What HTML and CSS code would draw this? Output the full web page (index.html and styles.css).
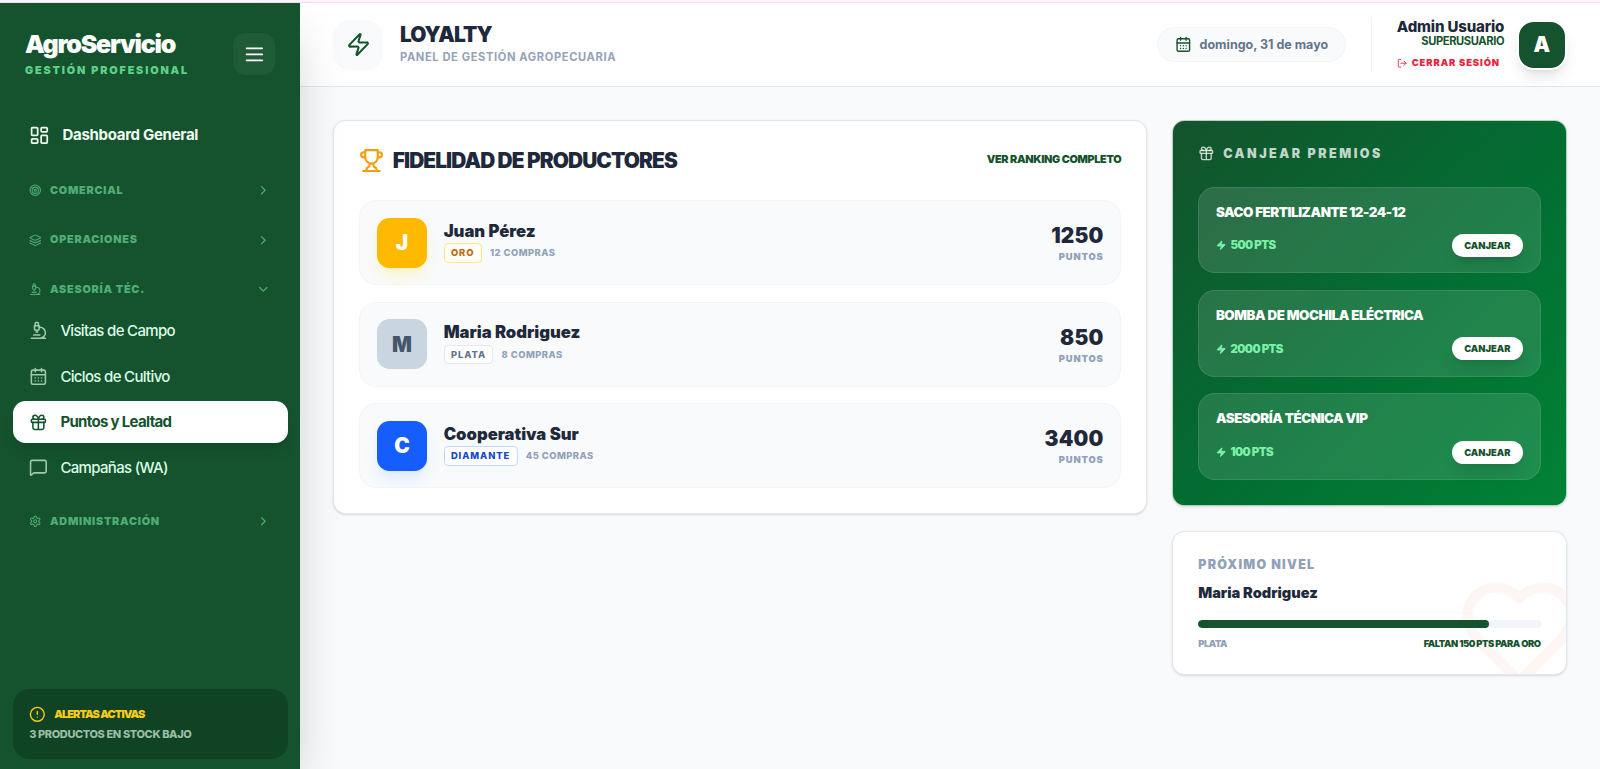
FILE: index.html
```html
<!DOCTYPE html>
<html lang="es">
<head>
    <meta charset="UTF-8">
    <meta name="viewport" content="width=device-width, initial-scale=1.0">
    <title>AgroServicio - Loyalty</title>
    <link rel="stylesheet" href="styles.css">
</head>
<body>
    <svg class="sprite" width="0" height="0">
        <symbol id="i-gift" viewBox="0 0 24 24">
            <rect x="3" y="8" width="18" height="4" rx="1"/>
            <path d="M12 8v13M19 12v7a2 2 0 0 1-2 2H7a2 2 0 0 1-2-2v-7"/>
            <path d="M7.5 8a2.5 2.5 0 0 1 0-5A4.8 8 0 0 1 12 8a4.8 8 0 0 1 4.5-5 2.5 2.5 0 0 1 0 5"/>
        </symbol>
        <symbol id="i-calendar" viewBox="0 0 24 24">
            <path d="M8 2v4M16 2v4M3 10h18"/>
            <rect x="3" y="4" width="18" height="18" rx="2"/>
            <path d="M8 14h.01M12 14h.01M16 14h.01M8 18h.01M12 18h.01M16 18h.01"/>
        </symbol>
        <symbol id="i-microscope" viewBox="0 0 24 24">
            <path d="M6 18h8M3 22h18M14 22a7 7 0 1 0 0-14h-1M9 14h2"/>
            <path d="M9 12a2 2 0 0 1-2-2V6h6v4a2 2 0 0 1-2 2Z"/>
            <path d="M12 6V3a1 1 0 0 0-1-1H9a1 1 0 0 0-1 1v3"/>
        </symbol>
        <symbol id="i-zap" viewBox="0 0 24 24">
            <path d="M4 14a1 1 0 0 1-.78-1.63l9.9-10.2a.5.5 0 0 1 .86.46l-1.92 6.02A1 1 0 0 0 13 10h7a1 1 0 0 1 .78 1.63l-9.9 10.2a.5.5 0 0 1-.86-.46l1.92-6.02A1 1 0 0 0 11 14z"/>
        </symbol>
        <symbol id="i-right" viewBox="0 0 24 24"><path d="m9 18 6-6-6-6"/></symbol>
        <symbol id="i-down" viewBox="0 0 24 24"><path d="m6 9 6 6 6-6"/></symbol>
    </svg>

    <div class="app">
        <aside class="sidebar">
            <div class="brand">
                <div>
                    <h1>AgroServicio</h1>
                    <p>Gestión Profesional</p>
                </div>
                <button class="menu-btn">
                    <svg class="icon s20" viewBox="0 0 24 24"><path d="M3 5h18M3 12h18M3 19h18"/></svg>
                </button>
            </div>

            <nav class="nav">
                <a class="nav-main">
                    <svg class="icon s20" viewBox="0 0 24 24"><rect x="3" y="3" width="7" height="9" rx="1"/><rect x="14" y="3" width="7" height="5" rx="1"/><rect x="14" y="12" width="7" height="9" rx="1"/><rect x="3" y="16" width="7" height="5" rx="1"/></svg>
                    Dashboard General
                </a>
                <div class="nav-group">
                    <svg class="icon s12" viewBox="0 0 24 24"><circle cx="12" cy="12" r="10"/><circle cx="12" cy="12" r="6"/><circle cx="12" cy="12" r="2"/></svg>
                    <span>Comercial</span>
                    <svg class="icon s14"><use href="#i-right"/></svg>
                </div>
                <div class="nav-group">
                    <svg class="icon s12" viewBox="0 0 24 24"><path d="M12.83 2.18a2 2 0 0 0-1.66 0L2.6 6.08a1 1 0 0 0 0 1.83l8.58 3.91a2 2 0 0 0 1.66 0l8.58-3.9a1 1 0 0 0 0-1.83z"/><path d="M2 12a1 1 0 0 0 .58.91l8.6 3.91a2 2 0 0 0 1.65 0l8.58-3.9A1 1 0 0 0 22 12"/><path d="M2 17a1 1 0 0 0 .58.91l8.6 3.91a2 2 0 0 0 1.65 0l8.58-3.9A1 1 0 0 0 22 17"/></svg>
                    <span>Operaciones</span>
                    <svg class="icon s14"><use href="#i-right"/></svg>
                </div>
                <div class="nav-group">
                    <svg class="icon s12"><use href="#i-microscope"/></svg>
                    <span>Asesoría Téc.</span>
                    <svg class="icon s14"><use href="#i-down"/></svg>
                </div>
                <div class="nav-items">
                    <a class="nav-item"><svg class="icon s18"><use href="#i-microscope"/></svg>Visitas de Campo</a>
                    <a class="nav-item"><svg class="icon s18"><use href="#i-calendar"/></svg>Ciclos de Cultivo</a>
                    <a class="nav-item active"><svg class="icon s18"><use href="#i-gift"/></svg>Puntos y Lealtad</a>
                    <a class="nav-item"><svg class="icon s18" viewBox="0 0 24 24"><path d="M22 17a2 2 0 0 1-2 2H6.8a2 2 0 0 0-1.4.6l-2.2 2.2A.7.7 0 0 1 2 21.3V5a2 2 0 0 1 2-2h16a2 2 0 0 1 2 2z"/></svg>Campañas (WA)</a>
                </div>
                <div class="nav-group">
                    <svg class="icon s12" viewBox="0 0 24 24"><path d="M12.22 2h-.44a2 2 0 0 0-2 2v.18a2 2 0 0 1-1 1.73l-.43.25a2 2 0 0 1-2 0l-.15-.08a2 2 0 0 0-2.73.73l-.22.38a2 2 0 0 0 .73 2.73l.15.1a2 2 0 0 1 1 1.72v.51a2 2 0 0 1-1 1.74l-.15.09a2 2 0 0 0-.73 2.73l.22.38a2 2 0 0 0 2.73.73l.15-.08a2 2 0 0 1 2 0l.43.25a2 2 0 0 1 1 1.73V20a2 2 0 0 0 2 2h.44a2 2 0 0 0 2-2v-.18a2 2 0 0 1 1-1.73l.43-.25a2 2 0 0 1 2 0l.15.08a2 2 0 0 0 2.73-.73l.22-.39a2 2 0 0 0-.73-2.73l-.15-.08a2 2 0 0 1-1-1.74v-.5a2 2 0 0 1 1-1.74l.15-.09a2 2 0 0 0 .73-2.73l-.22-.38a2 2 0 0 0-2.73-.73l-.15.08a2 2 0 0 1-2 0l-.43-.25a2 2 0 0 1-1-1.73V4a2 2 0 0 0-2-2z"/><circle cx="12" cy="12" r="3"/></svg>
                    <span>Administración</span>
                    <svg class="icon s14"><use href="#i-right"/></svg>
                </div>
            </nav>

            <div class="alerts">
                <div class="alerts-title">
                    <svg class="icon s16" viewBox="0 0 24 24"><circle cx="12" cy="12" r="10"/><path d="M12 8v4M12 16h.01"/></svg>
                    Alertas activas
                </div>
                <p>3 productos en stock bajo</p>
            </div>
        </aside>

        <div class="content">
            <header class="topbar">
                <div class="topbar-icon"><svg class="icon s24"><use href="#i-zap"/></svg></div>
                <div class="topbar-title">
                    <h2>Loyalty</h2>
                    <p>Panel de gestión agropecuaria</p>
                </div>
                <div class="date"><svg class="icon s16"><use href="#i-calendar"/></svg>domingo, 31 de mayo</div>
                <div class="user">
                    <div class="user-info">
                        <strong>Admin Usuario</strong>
                        <span class="role">Superusuario</span>
                        <a class="logout">
                            <svg class="icon s10" viewBox="0 0 24 24"><path d="M9 21H5a2 2 0 0 1-2-2V5a2 2 0 0 1 2-2h4M16 17l5-5-5-5M21 12H9"/></svg>
                            Cerrar sesión
                        </a>
                    </div>
                    <div class="user-avatar">A</div>
                </div>
            </header>

            <main class="main">
                <section class="card ranking">
                    <div class="ranking-head">
                        <svg class="icon s24" viewBox="0 0 24 24"><path d="M6 9H4.5a2.5 2.5 0 0 1 0-5H6M18 9h1.5a2.5 2.5 0 0 0 0-5H18M4 22h16"/><path d="M10 14.66V17c0 .55-.47.98-.97 1.21C7.85 18.75 7 20.24 7 22M14 14.66V17c0 .55.47.98.97 1.21C16.15 18.75 17 20.24 17 22M18 2H6v7a6 6 0 0 0 12 0V2Z"/></svg>
                        <h3>Fidelidad de Productores</h3>
                        <a>Ver ranking completo</a>
                    </div>
                    <div class="producers">
                        <div class="producer">
                            <div class="avatar gold">J</div>
                            <div class="producer-info">
                                <h4>Juan Pérez</h4>
                                <p><span class="badge gold">Oro</span>12 compras</p>
                            </div>
                            <div class="points"><strong>1250</strong><span>Puntos</span></div>
                        </div>
                        <div class="producer">
                            <div class="avatar silver">M</div>
                            <div class="producer-info">
                                <h4>Maria Rodriguez</h4>
                                <p><span class="badge silver">Plata</span>8 compras</p>
                            </div>
                            <div class="points"><strong>850</strong><span>Puntos</span></div>
                        </div>
                        <div class="producer">
                            <div class="avatar diamond">C</div>
                            <div class="producer-info">
                                <h4>Cooperativa Sur</h4>
                                <p><span class="badge diamond">Diamante</span>45 compras</p>
                            </div>
                            <div class="points"><strong>3400</strong><span>Puntos</span></div>
                        </div>
                    </div>
                </section>

                <div class="side">
                    <section class="card rewards">
                        <h3><svg class="icon s16"><use href="#i-gift"/></svg>Canjear premios</h3>
                        <div class="reward">
                            <h4>Saco Fertilizante 12-24-12</h4>
                            <div class="reward-row">
                                <span><svg class="icon s10 filled"><use href="#i-zap"/></svg>500 pts</span>
                                <button>Canjear</button>
                            </div>
                        </div>
                        <div class="reward">
                            <h4>Bomba de Mochila Eléctrica</h4>
                            <div class="reward-row">
                                <span><svg class="icon s10 filled"><use href="#i-zap"/></svg>2000 pts</span>
                                <button>Canjear</button>
                            </div>
                        </div>
                        <div class="reward">
                            <h4>Asesoría Técnica VIP</h4>
                            <div class="reward-row">
                                <span><svg class="icon s10 filled"><use href="#i-zap"/></svg>100 pts</span>
                                <button>Canjear</button>
                            </div>
                        </div>
                    </section>

                    <section class="card next-level">
                        <svg class="icon heart" viewBox="0 0 24 24"><path d="M19 14c1.49-1.46 3-3.21 3-5.5A5.5 5.5 0 0 0 16.5 3c-1.76 0-3 .5-4.5 2-1.5-1.5-2.74-2-4.5-2A5.5 5.5 0 0 0 2 8.5c0 2.3 1.5 4.05 3 5.5l7 7Z"/></svg>
                        <h3>Próximo nivel</h3>
                        <h4>Maria Rodriguez</h4>
                        <div class="progress"><div class="progress-fill" style="width: 85%"></div></div>
                        <div class="progress-labels"><span>Plata</span><span>Faltan 150 pts para Oro</span></div>
                    </section>
                </div>
            </main>
        </div>
    </div>
</body>
</html>
```

FILE: styles.css
```css
* {
    box-sizing: border-box;
    margin: 0;
    padding: 0;
}
html {
    font-size: 16.667px;
}
body {
    font-family: Inter, sans-serif;
    background: #f8fafc;
    color: #1e293b;
    height: 100vh;
    overflow: hidden;
    border-top: 2px solid #fcf3fd;
}
button {
    font-family: inherit;
    border: none;
    cursor: pointer;
}
.sprite {
    display: block;
}
.icon {
    flex-shrink: 0;
    fill: none;
    stroke: currentColor;
    stroke-width: 2;
    stroke-linecap: round;
    stroke-linejoin: round;
}
.s10 { width: 0.625rem; height: 0.625rem; }
.s12 { width: 0.75rem; height: 0.75rem; }
.s14 { width: 0.875rem; height: 0.875rem; }
.s16 { width: 1rem; height: 1rem; }
.s18 { width: 1.125rem; height: 1.125rem; }
.s20 { width: 1.25rem; height: 1.25rem; }
.s24 { width: 1.5rem; height: 1.5rem; }
.filled { fill: currentColor; }

.app {
    display: flex;
    height: 100%;
    border-top: 1px solid #efe2f0;
}

/* Sidebar */
.sidebar {
    width: 18rem;
    flex-shrink: 0;
    display: flex;
    flex-direction: column;
    background: #14532d;
    color: #fff;
    box-shadow: 0 25px 50px -12px rgba(0,0,0,0.25);
    z-index: 2;
    padding-bottom: 0.6rem;
}
.brand {
    display: flex;
    justify-content: space-between;
    align-items: center;
    padding: 1.65rem 1.5rem 0;
    height: 4.5rem;
}
.brand h1 {
    font-size: 1.5rem;
    line-height: 1.75rem;
    margin-top: 0.1rem;
    font-weight: 900;
    letter-spacing: -0.05em;
}
.brand p {
    font-size: 0.65rem;
    line-height: 1.1rem;
    margin-top: 0.15rem;
    font-weight: 900;
    letter-spacing: 0.17em;
    text-transform: uppercase;
    color: #5fcf8a;
}
.menu-btn {
    display: flex;
    align-items: center;
    justify-content: center;
    width: 2.5rem;
    height: 2.5rem;
    border-radius: 0.75rem;
    background: rgba(255,255,255,0.05);
    color: #fff;
}
.nav {
    flex: 1;
    padding: 2.04rem 0.75rem 0;
}
.nav-main {
    display: flex;
    align-items: center;
    gap: 0.75rem;
    height: 2.75rem;
    padding: 0 1rem;
    font-size: 0.9rem;
    font-weight: 700;
    letter-spacing: -0.02em;
    color: #f0fdf4;
}
.nav-group {
    display: flex;
    align-items: center;
    gap: 0.5rem;
    height: 1.95rem;
    margin-top: 1rem;
    padding: 0 1rem;
    font-size: 0.65rem;
    font-weight: 900;
    letter-spacing: 0.07em;
    text-transform: uppercase;
    color: #4fae74;
}
.nav-group span {
    flex: 1;
}
.nav-items {
    display: flex;
    flex-direction: column;
    gap: 0.25rem;
    padding-top: 0.25rem;
}
.nav-item {
    display: flex;
    align-items: center;
    gap: 0.75rem;
    height: 2.5rem;
    padding: 0 1rem;
    border-radius: 0.75rem;
    font-size: 0.9rem;
    font-weight: 500;
    letter-spacing: -0.045em;
    color: #dcfce7;
}
.nav-item .icon {
    opacity: 0.7;
}
.nav-item.active {
    background: #fff;
    color: #14532d;
    font-weight: 700;
    box-shadow: 0 10px 15px -3px rgba(0,0,0,0.1), 0 4px 6px -4px rgba(0,0,0,0.1);
}
.nav-item.active .icon {
    opacity: 1;
}
.alerts {
    margin: 0 0.75rem;
    height: 4.2rem;
    padding: 1rem;
    border-radius: 1rem;
    background: rgba(0,0,0,0.2);
    font-size: 0.66rem;
    font-weight: 800;
    text-transform: uppercase;
    letter-spacing: -0.035em;
}
.alerts-title {
    display: flex;
    align-items: center;
    gap: 0.5rem;
    height: 1rem;
    color: #facc15;
    font-weight: 900;
    letter-spacing: -0.085em;
}
.alerts p {
    margin-top: 0.28rem;
    line-height: 0.9rem;
    color: #9bbda8;
}

/* Header */
.content {
    flex: 1;
    min-width: 0;
}
.topbar {
    display: flex;
    align-items: center;
    height: 84px;
    padding: 0 2rem;
    background: #fff;
    border-bottom: 1px solid #e2e8f0;
}
.topbar-icon {
    display: flex;
    align-items: center;
    justify-content: center;
    width: 3rem;
    height: 3rem;
    margin-right: 1rem;
    border-radius: 1rem;
    background: #f8fafc;
    color: #14532d;
}
.topbar-title {
    flex: 1;
}
.topbar-title h2 {
    margin-top: 0.08rem;
    font-size: 1.25rem;
    line-height: 1.25rem;
    font-weight: 900;
    letter-spacing: -0.04em;
    text-transform: uppercase;
}
.topbar-title p {
    margin-top: 0.18rem;
    font-size: 0.67rem;
    line-height: 1rem;
    font-weight: 700;
    letter-spacing: 0.054em;
    text-transform: uppercase;
    color: #94a3b8;
}
.date {
    display: flex;
    align-items: center;
    gap: 0.5rem;
    height: 2.125rem;
    padding: 0 1rem;
    border: 1px solid #f1f5f9;
    border-radius: 2rem;
    background: #f8fafc;
    color: #64748b;
    font-size: 0.75rem;
    font-weight: 700;
}
.date .icon {
    color: #14532d;
}
.user {
    display: flex;
    align-items: center;
    gap: 0.75rem;
    height: 3.25rem;
    margin-left: 1.5rem;
    padding-left: 1.5rem;
    border-left: 1px solid #f1f5f9;
}
.user-info {
    display: flex;
    flex-direction: column;
    align-items: flex-end;
}
.user-info strong {
    font-size: 0.9rem;
    line-height: 1.03rem;
    font-weight: 800;
    letter-spacing: -0.01em;
}
.role {
    font-size: 0.67rem;
    line-height: 0.82rem;
    font-weight: 700;
    letter-spacing: -0.035em;
    text-transform: uppercase;
    color: #14532d;
}
.logout {
    display: flex;
    align-items: center;
    gap: 0.25rem;
    margin-top: 0.43rem;
    padding-right: 0.25rem;
    font-size: 0.5625rem;
    line-height: 0.875rem;
    font-weight: 900;
    letter-spacing: 0.1em;
    text-transform: uppercase;
    color: #e7243c;
}
.user-avatar {
    display: flex;
    align-items: center;
    justify-content: center;
    width: 3rem;
    height: 3rem;
    border: 2px solid #fff;
    border-radius: 1rem;
    background: #14532d;
    color: #fff;
    font-size: 1.25rem;
    font-weight: 900;
    box-shadow: 0 10px 15px -3px rgba(0,0,0,0.1), 0 4px 6px -4px rgba(0,0,0,0.1);
}

/* Main */
.main {
    display: grid;
    grid-template-columns: repeat(3, 1fr);
    gap: 1.5rem;
    align-items: start;
    padding: 2rem;
}
.card {
    border: 1px solid #e2e8f0;
    border-radius: 0.75rem;
    background: #fff;
    padding: 1.5rem;
    box-shadow: 0 1px 3px rgba(0,0,0,0.1), 0 1px 2px -1px rgba(0,0,0,0.1);
}
.ranking {
    grid-column: span 2;
}
.ranking-head {
    display: flex;
    align-items: center;
    height: 1.75rem;
    margin-bottom: 1.5rem;
}
.ranking-head .icon {
    color: #f59e0b;
}
.ranking-head h3 {
    flex: 1;
    margin-left: 0.5rem;
    font-size: 1.25rem;
    font-weight: 900;
    letter-spacing: -0.042em;
    text-transform: uppercase;
}
.ranking-head a {
    padding-bottom: 0.15rem;
    font-size: 0.65rem;
    font-weight: 900;
    letter-spacing: -0.03em;
    text-transform: uppercase;
    color: #14532d;
}
.producers {
    display: flex;
    flex-direction: column;
    gap: 1rem;
}
.producer {
    display: flex;
    align-items: center;
    gap: 1rem;
    padding: 0.985rem 1rem;
    border: 1px solid #f1f5f9;
    border-radius: 1rem;
    background: #f8fafc;
}
.avatar {
    display: flex;
    align-items: center;
    justify-content: center;
    width: 3rem;
    height: 3rem;
    border-radius: 0.75rem;
    color: #fff;
    font-size: 1.25rem;
    font-weight: 900;
}
.avatar.gold {
    background: #ffb900;
    box-shadow: 0 10px 15px -3px #fef3c6, 0 4px 6px -4px #fef3c6;
}
.avatar.silver {
    background: #cad5e2;
    color: #45556c;
}
.avatar.diamond {
    background: #155dfc;
    box-shadow: 0 10px 15px -3px #dbeafe, 0 4px 6px -4px #dbeafe;
}
.producer-info {
    flex: 1;
    padding-bottom: 0.25rem;
}
.producer-info h4 {
    font-size: 1rem;
    line-height: 1.45rem;
    font-weight: 900;
}
.producer-info p {
    display: flex;
    align-items: center;
    gap: 0.5rem;
    font-size: 0.5625rem;
    font-weight: 800;
    letter-spacing: 0.05em;
    text-transform: uppercase;
    color: #90a1b9;
}
.badge {
    padding: 0 0.375rem;
    line-height: 1.05rem;
    border: 1px solid;
    border-radius: 0.25rem;
    background: #fff;
    letter-spacing: 0.1em;
}
.badge.gold {
    color: #bb6a10;
    border-color: #fee685;
    background: #fffdf5;
}
.badge.silver {
    color: #62748e;
    border-color: #e2e8f0;
}
.badge.diamond {
    color: #1447c6;
    border-color: #bedbff;
}
.points {
    display: flex;
    flex-direction: column;
    align-items: flex-end;
}
.points strong {
    font-size: 1.25rem;
    line-height: 1.5rem;
    font-weight: 900;
    letter-spacing: 0.01em;
}
.points span {
    margin-bottom: -0.08rem;
    padding-top: 0.06rem;
    font-size: 0.5625rem;
    line-height: 0.9rem;
    font-weight: 900;
    letter-spacing: 0.09em;
    text-transform: uppercase;
    color: #90a1b9;
}

/* Right column */
.side {
    display: flex;
    flex-direction: column;
    gap: 1.5rem;
}
.rewards {
    display: flex;
    flex-direction: column;
    gap: 1rem;
    border-color: rgba(255,255,255,0.7);
    background: linear-gradient(to bottom right, #14532d, #036c31 50%, #008236);
    color: #fff;
}
.rewards h3 {
    display: flex;
    align-items: center;
    gap: 0.5rem;
    height: 0.85rem;
    margin-bottom: 0.58rem;
    font-size: 0.75rem;
    font-weight: 900;
    letter-spacing: 0.2em;
    text-transform: uppercase;
    color: rgba(255,255,255,0.75);
}
.reward {
    height: 5.2rem;
    padding: 0.9rem 1rem;
    border: 1px solid rgba(255,255,255,0.1);
    border-radius: 1rem;
    background: rgba(255,255,255,0.12);
}
.reward h4 {
    font-size: 0.8rem;
    line-height: 1.15rem;
    font-weight: 900;
    letter-spacing: -0.031em;
    text-transform: uppercase;
}
.reward-row {
    display: flex;
    align-items: center;
    justify-content: space-between;
    margin-top: 0.72rem;
}
.reward-row span {
    display: flex;
    align-items: center;
    gap: 0.25rem;
    font-size: 0.6875rem;
    font-weight: 900;
    letter-spacing: -0.05em;
    text-transform: uppercase;
    color: #7bf1a8;
}
.reward button {
    height: 1.375rem;
    padding: 0 0.75rem;
    border-radius: 1rem;
    background: #fff;
    color: #14532d;
    font-size: 0.5625rem;
    font-weight: 900;
    text-transform: uppercase;
    box-shadow: 0 10px 15px -3px rgba(0,0,0,0.1), 0 4px 6px -4px rgba(0,0,0,0.1);
}
.next-level {
    position: relative;
    height: 8.65rem;
    overflow: hidden;
}
/* keep the content above the heart */
.next-level > * {
    position: relative;
}
.next-level .heart {
    position: absolute;
    right: -1rem;
    bottom: -1.35rem;
    width: 7.5rem;
    height: 7.5rem;
    color: #fff5f5;
}
.next-level h3 {
    font-size: 0.75rem;
    line-height: 1rem;
    font-weight: 900;
    letter-spacing: 0.1em;
    text-transform: uppercase;
    color: #90a1b9;
}
.next-level h4 {
    margin-top: 0.5rem;
    font-size: 0.875rem;
    line-height: 1.4rem;
    font-weight: 900;
}
.progress {
    height: 0.5rem;
    margin-top: 0.85rem;
    border-radius: 1rem;
    background: #f1f5f9;
    overflow: hidden;
}
.progress-fill {
    height: 100%;
    border-radius: 1rem;
    background: #14532d;
}
.progress-labels {
    display: flex;
    justify-content: space-between;
    margin-top: 0.53rem;
    font-size: 0.5625rem;
    line-height: 0.875rem;
    font-weight: 900;
    letter-spacing: -0.048em;
    text-transform: uppercase;
    color: #90a1b9;
}
.progress-labels span:last-child {
    color: #14532d;
}
```
